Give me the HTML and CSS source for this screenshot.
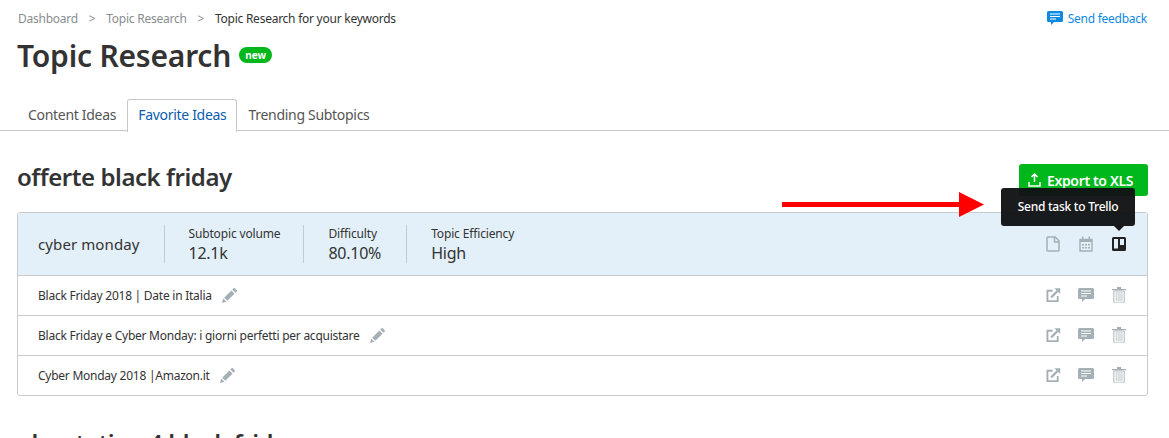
FILE: index.html
```html
<!DOCTYPE html>
<html lang="en">
<head>
    <meta charset="UTF-8">
    <title>Topic Research</title>
    <link rel="stylesheet" href="styles.css">
</head>
<body>
<svg class="sprites" width="0" height="0">
    <symbol id="bubble" viewBox="0 0 16 16">
        <path d="M1.500 1h13A1.500 1.500 0 0 1 16 2.500v8a1.500 1.500 0 0 1-1.500 1.500H7l-3 3v-3H1.500A1.500 1.500 0 0 1 0 10.500v-8A1.500 1.500 0 0 1 1.500 1z" fill="currentColor"/>
        <path d="M3 4h10M3 6.500h10M3 9h6" stroke="#fff" stroke-width="1.100" fill="none"/>
    </symbol>
    <symbol id="open" viewBox="0 0 16 16">
        <path d="M7 3.500H1.500v11h11V9" fill="none" stroke="currentColor" stroke-width="2"/>
        <path d="M5.500 10.500l7-7" fill="none" stroke="currentColor" stroke-width="2.400"/>
        <path d="M9 .8h6.200V7z" fill="currentColor"/>
    </symbol>
    <symbol id="trash" viewBox="0 0 14 16">
        <path d="M0 2h14v1.200H0zM5 0h4v2H5z" fill="currentColor"/>
        <path d="M1.800 4h10.400v11a1 1 0 0 1-1 1H2.800a1 1 0 0 1-1-1z" fill="none" stroke="currentColor" stroke-width=".9"/>
        <path d="M4.200 5v9.500M6.200 5v9.500M8 5v9.500M9.900 5v9.500" stroke="currentColor" stroke-width=".7"/>
    </symbol>
    <symbol id="pencil" viewBox="0 0 16 16">
        <path d="M0 16l1.300-4.700 3.400 3.400zM2.300 10.300L10 2.600l3.400 3.400-7.700 7.700zM11 1.600l1.300-1.300a1 1 0 0 1 1.400 0l2 2a1 1 0 0 1 0 1.400L14.400 5z" fill="currentColor"/>
    </symbol>
</svg>

<header class="top">
    <div class="crumbs">
        <a href="#">Dashboard</a>
        <span class="sep">&gt;</span>
        <a href="#">Topic Research</a>
        <span class="sep">&gt;</span>
        <span class="current">Topic Research for your keywords</span>
    </div>
    <a class="feedback" href="#">
        <svg width="16" height="16"><use href="#bubble"/></svg>
        Send feedback
    </a>
</header>

<div class="title">
    <h1>Topic Research</h1>
    <span class="badge">new</span>
</div>

<ul class="tabs">
    <li>Content Ideas</li>
    <li class="active">Favorite Ideas</li>
    <li>Trending Subtopics</li>
</ul>

<main>
    <section class="topic">
        <div class="topic-head">
            <h2>offerte black friday</h2>
            <button class="export">
                <svg width="13" height="14" viewBox="0 0 13 14"><path d="M6.500 1v8M3.500 4l3-3 3 3M1 9v4h11V9" fill="none" stroke="currentColor" stroke-width="1.500"/></svg>
                Export to XLS
            </button>
        </div>

        <div class="card">
            <div class="card-head">
                <div class="keyword">cyber monday</div>
                <div class="stat">
                    <span>Subtopic volume</span>
                    <b>12.1k</b>
                </div>
                <div class="stat">
                    <span>Difficulty</span>
                    <b>80.10%</b>
                </div>
                <div class="stat">
                    <span>Topic Efficiency</span>
                    <b>High</b>
                </div>
                <div class="actions head-actions">
                    <svg width="14" height="16" viewBox="0 0 14 16"><path d="M1.750 1h7.500L13 4.750V14.250a.75.75 0 0 1-.75.75H1.750a.75.75 0 0 1-.75-.75V1.750A.75.75 0 0 1 1.750 1z" fill="none" stroke="currentColor" stroke-width="1.500"/><path d="M8.500 1v5H13" fill="none" stroke="currentColor" stroke-width="1.500"/></svg>
                    <svg width="14" height="16" viewBox="0 0 14 16"><path d="M1 3.500h12V15H1z" fill="none" stroke="currentColor" stroke-width="1.400"/><path d="M1 3h12v3H1zM3 .5h1.500V4H3zM9.500.5H11V4H9.500z" fill="currentColor"/><path d="M3 8h2v1.500H3zM6 8h2v1.500H6zM9 8h2v1.500H9zM3 11h2v1.500H3zM6 11h2v1.500H6zM9 11h2v1.500H9z" fill="currentColor"/></svg>
                    <svg class="trello" width="14" height="14" viewBox="0 0 14 14"><path fill-rule="evenodd" d="M1.500 0h11A1.500 1.500 0 0 1 14 1.500v11a1.500 1.500 0 0 1-1.500 1.500h-11A1.500 1.500 0 0 1 0 12.500v-11A1.500 1.500 0 0 1 1.500 0zM2 2v9.500h4V2zm6 0v6h4V2z" fill="currentColor"/></svg>
                </div>
            </div>
            <div class="row">
                <span>Black Friday 2018 | Date in Italia</span>
                <svg class="pencil" width="15" height="15"><use href="#pencil"/></svg>
                <div class="actions">
                    <svg width="15" height="16"><use href="#open"/></svg>
                    <svg class="chat" width="16" height="16"><use href="#bubble"/></svg>
                    <svg width="14" height="16"><use href="#trash"/></svg>
                </div>
            </div>
            <div class="row">
                <span>Black Friday e Cyber Monday: i giorni perfetti per acquistare</span>
                <svg class="pencil" width="15" height="15"><use href="#pencil"/></svg>
                <div class="actions">
                    <svg width="15" height="16"><use href="#open"/></svg>
                    <svg class="chat" width="16" height="16"><use href="#bubble"/></svg>
                    <svg width="14" height="16"><use href="#trash"/></svg>
                </div>
            </div>
            <div class="row">
                <span>Cyber Monday 2018 |Amazon.it</span>
                <svg class="pencil" width="15" height="15"><use href="#pencil"/></svg>
                <div class="actions">
                    <svg width="15" height="16"><use href="#open"/></svg>
                    <svg class="chat" width="16" height="16"><use href="#bubble"/></svg>
                    <svg width="14" height="16"><use href="#trash"/></svg>
                </div>
            </div>
        </div>

        <div class="tooltip">Send task to Trello</div>
        <svg class="arrow" width="202" height="25" viewBox="0 0 202 25"><path d="M0 10h177V0l25 12.500L177 25V15H0z" fill="#f00"/></svg>
    </section>

    <section class="topic">
        <div class="topic-head">
            <h2>playstation 4 black friday</h2>
        </div>
    </section>
</main>
</body>
</html>
```

FILE: styles.css
```css
html, body {
    height: 100%;
    overflow: hidden;
}

body {
    margin: 0;
    background: #fff;
    color: #333;
    font-family: "Noto Sans", "Open Sans", sans-serif;
    font-size: 12px;
    letter-spacing: -0.25px;
}

a {
    color: inherit;
    text-decoration: none;
}

.sprites {
    position: absolute;
}

.top {
    display: flex;
    justify-content: space-between;
    align-items: center;
    padding: 10px 22px 0 18px;
    height: 16px;
}

.crumbs {
    color: #898d90;
    white-space: nowrap;
}

.sep {
    margin: 0 8px;
}

.current {
    color: #333;
}

.feedback {
    display: flex;
    align-items: center;
    gap: 5px;
    color: #0e8ae0;
}

.title {
    display: flex;
    align-items: center;
    gap: 8px;
    padding: 12px 17px 0;
    height: 36px;
}

.title h1 {
    margin: 0;
    font-size: 30px;
    font-weight: 600;
    line-height: 36px;
    letter-spacing: -0.2px;
}

.badge {
    background: #00b71c;
    color: #fff;
    font-size: 10px;
    font-weight: 700;
    line-height: 16px;
    padding: 0 6px;
    margin-bottom: 2px;
    border-radius: 8px;
    letter-spacing: 0;
}

.tabs {
    display: flex;
    list-style: none;
    margin: 25px 0 0;
    padding: 0 17px;
    height: 31px;
    border-bottom: 1px solid #c8c8c8;
    font-size: 14px;
    letter-spacing: -0.3px;
    color: #555;
}

.tabs li {
    padding: 0 10px;
    line-height: 30px;
    height: 30px;
    border: 1px solid transparent;
    border-bottom: 0;
}

.tabs .active {
    background: #fff;
    color: #0b5cad;
    height: 32px;
    padding: 0 9px 0 10px;
    border-color: #c8c8c8;
    border-radius: 3px 3px 0 0;
}

.tabs .active + li {
    padding-left: 11px;
}

main {
    padding: 0 21px 0 17px;
}

.topic {
    position: relative;
}

.topic + .topic {
    padding-top: 1px;
}

.topic-head {
    display: flex;
    justify-content: space-between;
    align-items: center;
    height: 32px;
    padding-top: 33px;
    padding-bottom: 16px;
}

.topic-head h2 {
    margin: 0 0 8px;
    font-size: 24px;
    font-weight: 600;
    letter-spacing: -0.45px;
}

.export {
    display: flex;
    align-items: center;
    gap: 6px;
    height: 32px;
    width: 129px;
    padding: 0 0 0 9px;
    white-space: nowrap;
    background: #00b71c;
    color: #fff;
    border: 0;
    border-radius: 3px;
    font: 600 14px "Noto Sans", sans-serif;
    letter-spacing: -0.35px;
}

.card {
    border: 1px solid #c8ccce;
    border-radius: 3px;
}

.card-head {
    display: flex;
    align-items: center;
    height: 62px;
    background: #e3f0f9;
    border-radius: 3px 3px 0 0;
}

.keyword {
    font-size: 15px;
    padding: 0 24px 0 20px;
    line-height: 38px;
    border-right: 1px solid #c0ccd4;
    letter-spacing: 0.1px;
}

.stat {
    display: flex;
    flex-direction: column;
    padding: 0 23px 0 24px;
    height: 38px;
    border-right: 1px solid #c0ccd4;
}

.stat span {
    font-size: 12px;
    line-height: 18px;
    letter-spacing: -0.15px;
}

.stat b {
    font-size: 16px;
    font-weight: 400;
    line-height: 20px;
}

.stat:nth-child(3) {
    padding-right: 25px;
}

.stat:nth-child(4) {
    border-right: 0;
}

.actions {
    display: flex;
    align-items: center;
    gap: 17px;
    margin-left: auto;
    color: #a5b0b5;
    padding-right: 21px;
}

.head-actions {
    gap: 19px;
}

.chat {
    margin-right: 1px;
}

.trello {
    color: #222;
}

.row {
    display: flex;
    align-items: center;
    height: 38px;
    padding: 0 0 1px 20px;
    border-top: 1px solid #c8ccce;
}

.pencil {
    margin-left: 10px;
    color: #a5b0b5;
}

.tooltip {
    position: absolute;
    left: 984px;
    top: 57px;
    width: 134px;
    height: 38px;
    line-height: 38px;
    text-align: center;
    background: rgba(16, 18, 20, 0.96);
    color: #fff;
    border-radius: 3px;
    font-weight: 500;
}

.tooltip::after {
    content: "";
    position: absolute;
    left: 112px;
    bottom: -5px;
    border: 6px solid transparent;
    border-top-color: #16181a;
    border-bottom: 0;
}

.arrow {
    position: absolute;
    left: 765px;
    top: 61px;
}
```
